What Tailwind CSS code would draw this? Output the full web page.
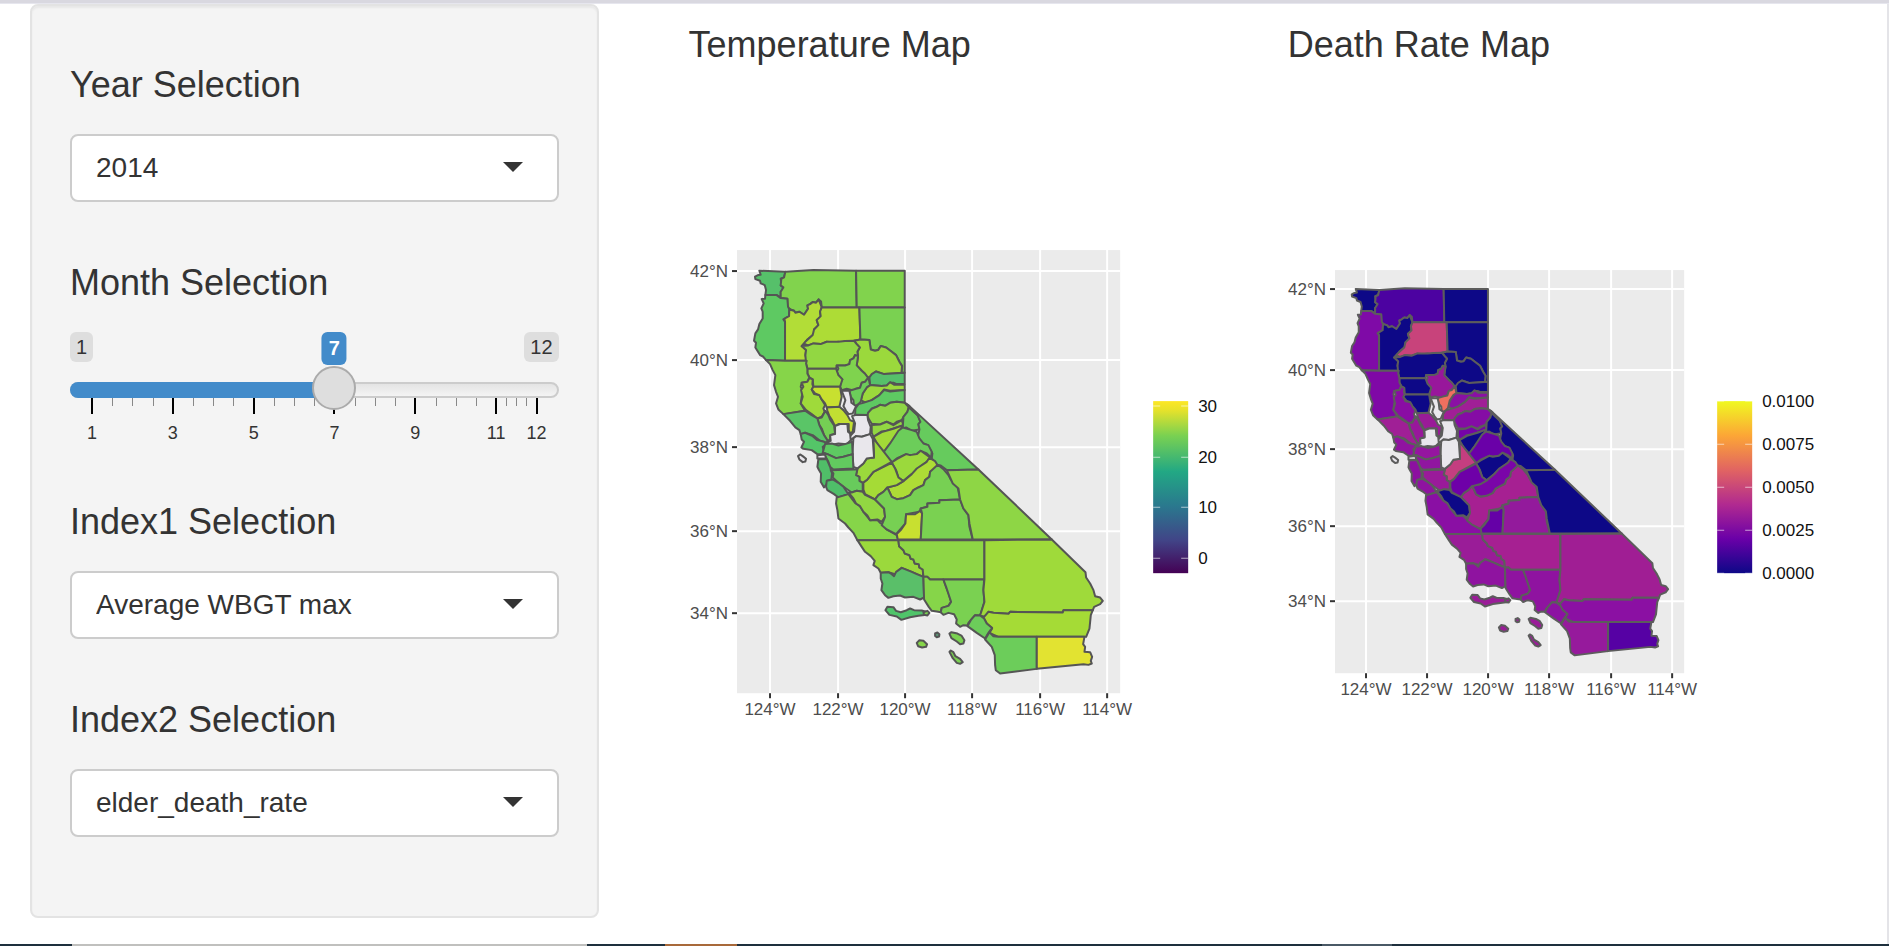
<!DOCTYPE html>
<html lang="en">
<head>
<meta charset="utf-8">
<title>California temperature and death rate</title>
<script src="https://cdn.jsdelivr.net/npm/@tailwindcss/browser@4"></script>
</head>
<body class="flex min-h-screen flex-col bg-white font-['Liberation_Sans',Arial,sans-serif] text-[#333]">
<div class="h-[3px] bg-[#d9d8e0]"></div>
<div class="h-px bg-[#e6e6ee]"></div>
<div class="flex grow">
  <aside class="ml-[30px] w-[30.1%] shrink-0 self-start rounded-lg border-2 border-[#e3e3e3] bg-[#f4f4f4] px-[38px] pt-[59px] pb-[79px] shadow-[inset_0_2px_2px_rgba(0,0,0,0.05)]">
    <form class="flex flex-col gap-[61px]">
      <div>
        <label for="year" class="block text-4xl leading-10">Year Selection</label>
        <div class="relative mt-[29px]">
          <select id="year" class="block h-[68px] w-full appearance-none rounded-lg border-2 border-[#ccc] bg-white px-6 text-[28px]"><option>2014</option></select>
          <svg class="pointer-events-none absolute top-7 right-9 h-[10px] w-5" viewBox="0 0 20 10"><path d="M0 0H20L10 10Z" fill="#333"/></svg>
        </div>
      </div>
      <div>
        <label for="month" class="block text-4xl leading-10">Month Selection</label>
        <div class="relative mt-[29px] h-[109px]">
          <div class="flex h-[50px] items-start justify-between text-xl leading-[30px]">
            <span class="rounded-md bg-[#dedede] px-[6px]">1</span>
            <span class="rounded-md bg-[#dedede] px-[6px]">12</span>
          </div>
          <div class="h-4 overflow-hidden rounded-lg border-2 border-[#ccc] bg-linear-to-b from-[#e4e4e4] to-[#f4f4f4]"></div>
          <div class="absolute top-[50px] left-0 h-4 rounded-l-lg bg-[#428bca]" style="width:54.3%"></div>
          <div id="ticks" class="relative mx-[22px] h-[43px]"></div>
          <input id="month" type="range" min="1" max="12" value="7" class="absolute top-[34px] left-0 m-0 h-11 w-full appearance-none bg-transparent [&::-webkit-slider-thumb]:h-11 [&::-webkit-slider-thumb]:w-11 [&::-webkit-slider-thumb]:appearance-none [&::-webkit-slider-thumb]:rounded-full [&::-webkit-slider-thumb]:border-2 [&::-webkit-slider-thumb]:border-[#ababab] [&::-webkit-slider-thumb]:bg-[#dedede]">
          <div class="pointer-events-none absolute inset-x-[22px] top-0">
            <output for="month" class="absolute top-0 -translate-x-1/2 rounded-md bg-[#428bca] px-[7px] text-xl leading-[33px] font-bold text-white" style="left:54.5%">7</output>
          </div>
        </div>
      </div>
      <div>
        <label for="index1" class="block text-4xl leading-10">Index1 Selection</label>
        <div class="relative mt-[29px]">
          <select id="index1" class="block h-[68px] w-full appearance-none rounded-lg border-2 border-[#ccc] bg-white px-6 text-[28px]"><option>Average WBGT max</option></select>
          <svg class="pointer-events-none absolute top-7 right-9 h-[10px] w-5" viewBox="0 0 20 10"><path d="M0 0H20L10 10Z" fill="#333"/></svg>
        </div>
      </div>
      <div>
        <label for="index2" class="block text-4xl leading-10">Index2 Selection</label>
        <div class="relative mt-[29px]">
          <select id="index2" class="block h-[68px] w-full appearance-none rounded-lg border-2 border-[#ccc] bg-white px-6 text-[28px]"><option>elder_death_rate</option></select>
          <svg class="pointer-events-none absolute top-7 right-9 h-[10px] w-5" viewBox="0 0 20 10"><path d="M0 0H20L10 10Z" fill="#333"/></svg>
        </div>
      </div>
    </form>
  </aside>
  <main class="grid grow grid-cols-2 border-r-2 border-[#e4e4e8] pt-[21px] pl-[90px]">
    <section>
      <h2 class="text-4xl leading-10">Temperature Map</h2>
      <svg id="temperature" class="block w-full font-['Liberation_Sans',Arial,sans-serif] text-[17px]" viewBox="689 65 599 699" role="img" aria-label="Temperature by county">
        <defs><linearGradient id="viridis" x1="0" y1="0" x2="0" y2="1">
          <stop offset="0" stop-color="#fde725"/><stop offset=".05" stop-color="#e8e22a"/><stop offset=".2" stop-color="#7ad151"/><stop offset=".41" stop-color="#22a884"/><stop offset=".61" stop-color="#2a788e"/><stop offset=".81" stop-color="#414487"/><stop offset="1" stop-color="#440154"/>
        </linearGradient></defs>
      </svg>
    </section>
    <section>
      <h2 class="text-4xl leading-10">Death Rate Map</h2>
      <svg id="deaths" class="block w-full font-['Liberation_Sans',Arial,sans-serif] text-[17px]" viewBox="1288 65 599 699" role="img" aria-label="Death rate by county">
        <defs><linearGradient id="plasma" x1="0" y1="0" x2="0" y2="1">
          <stop offset="0" stop-color="#f0f921"/><stop offset=".2" stop-color="#fca636"/><stop offset=".4" stop-color="#e16462"/><stop offset=".6" stop-color="#b12a90"/><stop offset=".8" stop-color="#6a00a8"/><stop offset="1" stop-color="#0d0887"/>
        </linearGradient></defs>
      </svg>
    </section>
  </main>
</div>
<footer class="flex h-[2px] bg-[#1e303d]">
  <div class="w-[3.8%]"></div><div class="w-[27.3%] bg-[#c0c0be]"></div><div class="w-[4.1%]"></div><div class="w-[3.8%] bg-[#a8693a]"></div><div class="w-[31%]"></div><div class="w-[3.7%] bg-[#4a5966]"></div>
</footer>
<script>
// Slider scale: a labelled tick every two months, three minor ticks between.
const majors = [1, 3, 5, 7, 9, 11, 12];
let ticks = '';
majors.forEach((m, i) => {
  const at = v => (v - 1) / 11 * 100;
  ticks += `<i class="absolute top-0 h-4 w-[2px] -translate-x-1/2 bg-black" style="left:${at(m)}%"></i><span class="absolute top-[25px] -translate-x-1/2 text-lg leading-5" style="left:${at(m)}%">${m}</span>`;
  if (i < 6) for (let k = 1; k < 4; k++)
    ticks += `<i class="absolute top-0 h-2 w-px bg-[#888]" style="left:${at(m + (majors[i + 1] - m) * k / 4)}%"></i>`;
});
document.getElementById('ticks').innerHTML = ticks;

const N = '#0d0887', NA = '#e9e7ec';
// Counties: name, outline, temperature fill, death rate fill.
const counties = [
['Del Norte','88,92 166,95 162,112 152,116 154,128 152,136 160,142 156,152 152,155 152,172 140,165 106,165 108,150 104,135 92,130 90,122 76,117 75,110 84,105 92,104','#56c06a',N],
['Siskiyou','166,95 250,90 378,92 380,202 275,202 273,184 266,178 258,188 248,186 240,192 232,196 234,206 228,215 222,224 208,215 196,218 192,212 182,208 172,202 172,176 152,174 152,155 160,142 152,136 154,116 162,112','#81d34d','#4c02a1'],
['Modoc','378,92 524,92 524,202 380,202','#81d34d',N],
['Humboldt','106,165 140,165 152,174 172,176 174,200 178,208 177,228 160,238 165,245 165,362 108,360 100,350 90,345 76,322 78,308 72,302 76,280 84,268 88,252 98,235 98,215 94,205 101,190 95,177 105,176','#5ec962','#7f0aa7'],
['Trinity','178,208 192,212 196,218 208,215 222,224 228,215 234,206 232,196 240,192 248,186 258,188 266,178 275,202 270,215 272,230 260,240 265,255 252,268 252,282 232,298 225,308 215,318 228,330 226,345 230,362 165,362 165,245 163,236 177,228','#b2dd37',N],
['Shasta','275,202 388,202 391,298 372,302 345,303 335,308 325,305 310,307 290,305 272,312 250,310 235,316 225,312 215,318 225,306 248,285 252,268 265,255 260,240 272,228 270,215','#addc36','#c8437b'],
['Lassen','388,202 524,202 524,398 514,398 516,378 508,365 498,345 485,335 468,322 452,318 444,330 435,332 422,328 418,300 391,298','#7ad151',N],
['Plumas','372,302 391,298 418,300 422,328 435,332 444,330 452,318 468,322 485,335 498,345 508,365 516,378 514,398 490,400 462,402 438,394 430,400 420,412 412,412 404,400 395,392 380,376 384,348 382,335 389,322 380,312','#9bd93c',N],
['Tehama','215,318 235,316 250,310 272,312 290,305 325,305 345,303 372,302 380,312 389,322 382,335 384,348 375,345 370,355 360,360 358,372 345,376 320,376 318,386 232,386 228,370 226,345 228,330','#92d742',N],
['Butte','384,348 380,376 395,392 404,400 415,414 405,425 395,428 390,443 378,446 372,452 350,446 335,450 330,440 332,425 337,418 325,405 320,395 325,385 320,376 345,376 358,372 360,360 370,355 375,345','#7fd34e','#98179b'],
['Glenn','232,386 318,386 325,405 337,418 330,440 250,440 248,418 238,412 232,400','#92d742',N],
['Mendocino','108,360 165,362 230,362 228,370 232,386 232,400 238,412 232,425 215,428 212,440 220,455 215,470 212,490 225,512 160,522 145,508 138,490 144,470 138,455 132,435 136,405 128,390 120,372','#86d549','#7f08a6'],
['Lake','238,414 248,418 247,432 250,440 245,448 252,462 268,465 275,478 285,495 280,505 284,515 275,530 262,535 245,522 228,510 212,490 218,470 213,450 220,440 215,428 232,425','#9fda3a','#8a0da4'],
['Colusa','250,440 330,440 335,470 328,500 290,502 285,490 275,478 268,465 255,460 245,448','#c8e030',N],
['Sierra','425,402 438,394 462,402 524,398 524,432 500,432 490,428 480,428 470,436 455,438 420,435 418,412','#56c06a',N],
['Nevada','418,435 455,438 470,436 480,426 492,434 524,434 524,450 480,452 462,448 448,465 425,480 408,488 392,480 398,460 410,442','#9bd93c','#8a10a4'],
['Placer','400,488 425,480 448,465 462,450 480,454 524,450 524,488 500,485 480,488 465,497 450,494 440,500 425,506 412,525 375,525 376,505 385,492','#5ec962','#a01f96'],
['Yuba','358,452 378,446 390,443 395,428 405,425 415,412 420,435 410,442 398,460 392,485 385,492 372,500 370,480 362,470','#6ccd5a','#f0705f'],
['Sutter','335,452 358,452 362,470 364,488 378,498 368,520 356,522 348,512 340,498 346,480',NA,NA],
['Yolo','290,502 328,500 340,510 352,525 360,540 372,545 368,575 360,580 356,570 356,552 325,552 315,558 306,540 298,528 292,512','#c2df32','#9a1b98'],
['El Dorado','425,506 440,500 450,494 465,497 480,488 500,485 524,488 537,497 532,515 522,528 515,540 500,545 490,553 470,545 450,553 425,551 418,540 412,528 414,518','#8ed645','#850ca5'],
['Sacramento','366,528 378,524 412,525 414,540 422,560 420,582 395,590 378,588 370,594 362,600 358,590 372,575 375,550',NA,NA],
['Solano','315,558 330,552 352,552 354,575 360,580 362,600 350,612 325,610 306,614 290,606 302,602 300,585 315,582',NA,NA],
['Napa','262,535 275,532 286,512 295,525 300,538 312,556 315,580 300,585 300,600 290,600 282,585 275,565 268,555','#75cf54','#98189b'],
['Sonoma','160,522 225,512 245,525 262,535 268,555 282,585 292,600 290,608 270,602 248,585 225,578 212,582 208,570 196,562 180,542','#5ac567','#a01f96'],
['Marin','212,582 225,578 248,588 262,600 282,605 290,612 278,620 282,635 276,642 262,642 245,630 220,626 214,622 222,605 215,598','#54c568','#9013a0'],
['Amador','425,555 450,553 470,545 490,555 515,540 520,555 490,565 470,572 455,574 430,590 425,578','#92d742','#7503a8'],
['Calaveras','430,590 455,576 490,566 520,555 510,570 495,592 480,612 462,635 445,618','#a2da37',N],
['Alpine','520,530 532,515 538,498 548,512 565,528 571,545 565,552 568,568 545,572 528,562 518,565','#6ccd5a',N],
['Mono','524,488 535,495 745,688 650,690 632,676 620,674 605,655 607,640 592,615 575,608 563,590 568,568 565,552 571,545 562,525 540,505','#66cb5d',N],
['Tuolumne','505,572 518,562 545,570 560,575 568,595 580,610 595,615 605,635 603,652 590,640 572,632 560,642 540,645 528,642 500,655 485,667 460,637 480,610','#6ccd5a','#6a00a8'],
['Mariposa','485,667 500,657 528,642 540,645 560,642 572,632 600,652 590,665 570,680 545,702 520,723 505,712 498,690','#9bd93c',N],
['Madera','472,742 500,735 520,723 545,702 560,685 590,665 598,653 615,663 623,676 610,690 600,695 598,710 585,720 580,735 565,742 550,750 540,765 520,774 500,777 485,770','#addc36','#7a05a8'],
['Merced','400,728 412,718 430,695 485,668 495,685 505,712 520,723 500,735 472,742 460,755 445,765 435,778 405,762 400,748','#a5db36','#6e00a8'],
['Stanislaus','430,595 485,665 430,695 412,718 398,728 388,722 388,710 378,705 382,685 400,670 410,655 432,652','#9bd93c','#c43e80'],
['San Joaquin','370,594 378,588 395,590 420,582 428,596 432,652 410,655 400,670 382,685 370,680 367,640',NA,NA],
['Contra Costa','285,612 305,610 325,616 345,612 366,605 368,642 340,650 318,654 305,648 292,642 278,638','#5ec962','#9515a0'],
['Alameda','280,638 292,642 305,648 318,654 340,650 368,642 370,685 310,688 300,680 295,665','#62ca5f','#9015a0'],
['San Francisco','262,645 285,643 288,655 262,655',NA,NA],
['San Mateo','265,657 290,657 300,680 306,700 304,718 292,722 290,732 282,742 272,725 273,700 266,688 262,680','#50be68','#8c10a0'],
['Santa Clara','302,690 370,688 382,688 378,705 388,710 388,722 398,728 398,755 380,752 365,757 348,745 325,728 308,712 310,700','#68cb5c','#9a1a9a'],
['Santa Cruz','290,722 308,718 325,728 340,740 355,762 335,768 325,772 312,762 292,750 288,740','#4fbe69','#8f13a0'],
['Monterey','320,772 335,768 355,762 375,788 390,798 400,815 420,840 442,840 450,848 462,855 468,866 500,885 505,900 382,900 370,878 355,862 345,850 325,835 322,810 318,790','#86d549','#8a0fa4'],
['San Benito','355,757 365,757 380,752 398,755 405,764 435,778 462,805 465,830 455,845 442,838 420,840 412,826 400,815 390,798 378,790 370,775','#92d742',N],
['Fresno','435,778 445,765 460,755 472,742 485,770 500,777 520,774 540,765 550,750 565,742 580,735 585,720 598,710 600,695 623,674 640,687 655,705 662,718 682,738 690,778 628,780 628,788 592,790 592,800 572,805 568,815 528,822 526,850 498,882 470,868 455,855 465,830 462,805','#77d053','#a62092'],
['Kings','528,822 555,822 570,812 576,820 572,898 503,898 500,882 512,870 526,850','#c8e030','#6500a7'],
['Tulare','576,820 572,805 592,800 592,790 628,788 628,780 690,778 700,805 715,825 718,860 728,898 572,898','#7ad151','#931a9c'],
['Inyo','650,690 745,688 965,898 728,898 718,850 715,825 700,805 690,778 685,745 668,730 660,712','#8ed645',N],
['San Luis Obispo','382,900 505,900 507,918 520,930 524,940 538,945 542,956 550,958 554,970 566,972 568,982 578,988 580,1010 545,995 515,983 495,1002 475,996 452,998 445,985 430,975 434,962 422,948 405,935 395,920','#9bd93c','#9a1c98'],
['Kern','505,900 763,900 763,1018 600,1018 592,1010 580,1010 578,988 568,982 566,972 554,970 550,958 542,956 538,945 524,940 520,930 507,918','#8ed645','#a62092'],
['Santa Barbara','452,998 475,996 485,1002 492,1008 498,995 515,983 545,995 560,1002 580,1010 582,1072 570,1078 550,1070 525,1072 510,1066 490,1068 475,1073 465,1065 454,1050 457,1030 452,1015','#5abf69','#8f13a0'],
['Ventura','580,1010 592,1010 600,1018 640,1018 648,1040 656,1060 663,1085 655,1097 635,1103 632,1116 620,1114 605,1112 596,1100 582,1078','#86d549','#8f13a0'],
['Los Angeles','640,1018 762,1018 760,1050 763,1085 755,1110 750,1126 735,1125 715,1148 712,1156 700,1155 690,1160 678,1150 680,1138 672,1122 655,1118 640,1124 632,1116 635,1103 655,1097 663,1085 648,1040','#7ad151','#8f13a0'],
['San Bernardino','763,900 965,898 1066,996 1068,1012 1080,1030 1090,1050 1095,1068 1110,1072 1118,1082 1110,1092 1092,1100 1088,1110 1000,1110 998,1117 840,1115 835,1121 790,1118 775,1115 765,1130 750,1126 755,1110 763,1085 760,1050 763,1018','#9fda3a','#a01e94'],
['Riverside','775,1115 790,1118 835,1121 840,1115 998,1117 1000,1110 1088,1110 1082,1125 1080,1145 1078,1165 1068,1190 805,1190 778,1178 786,1165 770,1150 760,1132','#a5db36','#8b10a3'],
['Orange','735,1125 750,1126 762,1135 770,1150 786,1163 775,1178 765,1195 740,1178 712,1158 722,1140','#6ccd5a','#8c12a2'],
['San Diego','778,1176 790,1188 805,1190 920,1190 920,1286 810,1300 797,1290 795,1275 794,1245 785,1220 765,1198','#6ccd5a','#961a9c'],
['Imperial','920,1190 1063,1190 1059,1212 1065,1220 1063,1235 1080,1236 1086,1250 1082,1262 1085,1270 1075,1274 1060,1272 920,1286','#e2e331','#5601a4'],
['Channel Islands North','466,1110 472,1100 490,1101 498,1112 512,1116 530,1110 540,1105 552,1110 575,1111 592,1116 590,1124 565,1127 540,1131 514,1139 500,1129 478,1124','#50c46a','#9a1c98'],
['Anacapa','580,1116 592,1112 598,1118 592,1126 582,1124','#7ad151','#9a1c98'],
['San Nicolas','560,1208 568,1200 580,1202 591,1212 588,1220 576,1222 564,1218','#86d549','#9a1c98'],
['Santa Barbara Island','615,1180 622,1177 628,1182 627,1189 620,1191 615,1187','#5a9a78','#9a1c98'],
['Santa Catalina','658,1180 664,1176 682,1180 694,1186 703,1200 700,1210 690,1212 680,1204 664,1194','#7ad151','#9a1c98'],
['San Clemente','658,1235 662,1231 670,1236 676,1248 690,1256 698,1266 690,1271 680,1268 668,1254','#7ad151','#9a1c98'],
['Farallon','204,648 210,643 218,648 228,656 226,664 218,666 208,658',NA,NA]
];

function draw(id, p) {
  let s = `<rect x="${p.x0}" y="${p.y0}" width="${p.x1 - p.x0}" height="${p.y1 - p.y0}" fill="#ebebeb"/>`;
  p.gx.forEach((x, i) => {
    s += `<path d="M${x} ${p.y0}V${p.y1}" stroke="#fff" stroke-width="2"/><path d="M${x} ${p.y1}v5" stroke="#333" stroke-width="2"/>`;
    s += `<text x="${x}" y="${p.y1 + 22}" text-anchor="middle" fill="#4d4d4d">${124 - 2 * i}°W</text>`;
  });
  p.gy.forEach((y, i) => {
    s += `<path d="M${p.x0} ${y}H${p.x1}" stroke="#fff" stroke-width="2"/><path d="M${p.x0} ${y}h-5" stroke="#333" stroke-width="2"/>`;
    s += `<text x="${p.x0 - 9}" y="${y + 6}" text-anchor="end" fill="#4d4d4d">${42 - 2 * i}°N</text>`;
  });
  s += `<g transform="translate(${p.ox} ${p.oy}) scale(${p.k})" stroke="${p.line}" stroke-width="${2 / p.k}" stroke-linejoin="round">`;
  counties.forEach(c => { s += `<polygon points="${c[1]}" fill="${c[p.col]}"><title>${c[0]}</title></polygon>`; });
  s += `</g><rect x="${p.lx}" y="401" width="35" height="172" fill="url(#${p.ramp})"/>`;
  p.legend.forEach(([t, y]) => {
    s += `<path d="M${p.lx} ${y}h7m21 0h7" stroke="#fff" stroke-opacity=".6"/><text x="${p.lx + 45}" y="${y + 6}" fill="#111">${t}</text>`;
  });
  document.getElementById(id).insertAdjacentHTML('beforeend', s);
}
draw('temperature', {x0:737, x1:1120, y0:250, y1:693, gx:[770,838,905,972,1040,1107], gy:[271,360,447,531,613],
  ox:730, oy:240, k:1/3, col:2, line:'#555', lx:1153, ramp:'viridis', legend:[['30',406],['20',457],['10',507],['0',558]]});
draw('deaths', {x0:1335, x1:1684, y0:270, y1:673, gx:[1366,1427,1488,1549,1611,1672], gy:[289,370,449,526,601],
  ox:1329, oy:261, k:.3032, col:3, line:'#5c5c5c', lx:1717, ramp:'plasma', legend:[['0.0100',401],['0.0075',444],['0.0050',487],['0.0025',530],['0.0000',573]]});
</script>
</body>
</html>
